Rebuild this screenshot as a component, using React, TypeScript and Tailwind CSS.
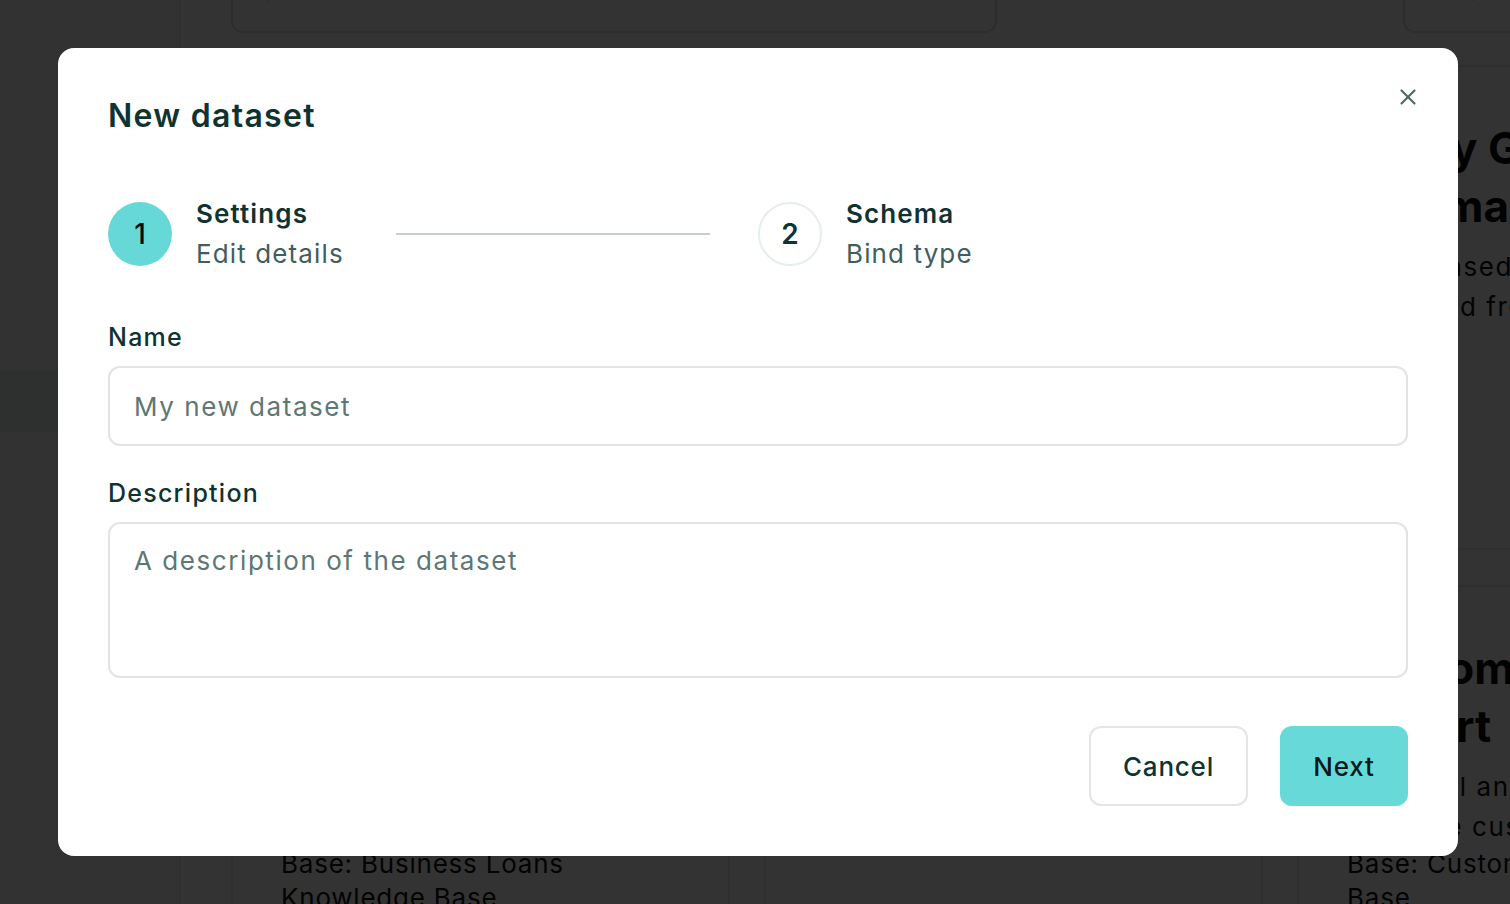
import { X } from 'lucide-react'

const font = { fontFamily: 'Inter, "Noto Sans", sans-serif' }

function Card({ title, desc, base }: { title: string; desc: string; base: string }) {
  return (
    <div className="h-[485px] rounded-[16px] border-2 border-[#e6ecea] bg-white px-[48px] pt-[52px]">
      <h3 className="text-[44px] font-bold leading-[58px] text-[#0b0b0b]">{title}</h3>
      <p className="mt-[12px] text-[26px] leading-[40px] tracking-[0.06em] text-[#111]">{desc}</p>
      <p className="text-[26px] leading-[34px] tracking-[0.03em] text-[#111]">{base}</p>
    </div>
  )
}

export default function App() {
  return (
    <div className="relative h-[904px] w-[1510px] overflow-hidden bg-white" style={font}>
      {/* page behind the dialog */}
      <div className="flex h-full">
        <aside className="w-[181px] shrink-0 border-r-2 border-[#e8eeec] bg-[#f2f9f6] pt-[370px]">
          <div className="h-[62px] bg-[#e4eeee]" />
        </aside>
        <main className="flex-1 pl-[50px] -mt-[47px]">
          <div className="flex items-center gap-[406px]">
            <div className="h-[80px] w-[766px] rounded-[12px] border-2 border-[#e2e2e2] px-[26px] pt-[16px] text-[26px] text-[#111]">
              Search datasets...
            </div>
            <div className="h-[80px] w-[160px] rounded-[12px] border-2 border-[#e2e2e2] px-[30px] pt-[16px] text-[26px] text-[#111]">
              ⇅ Sort
            </div>
          </div>
          <div className="mt-[32px] grid w-[1565px] grid-cols-3 gap-x-[34px] gap-y-[35px]">
            <Card title="Loan Glossary Summary" desc="Rule-based glossary assembled from loan terms base" base="" />
            <Card title="Support Ticket Overview" desc="Rule-based summary generated from the ticket base" base="" />
            <Card title="Policy Glossyr Summaries" desc="Term-based definitions extracted from policy docs base" base="" />
            <Card title="Loan Offers Report" desc="Practical answers generated from the knowledge" base="Base: Business Loans Knowledge Base" />
            <Card title="Help Desk Report" desc="Practical answers generated from the knowledge" base="Base: Help Desk Knowledge Base" />
            <Card title="Customer Support Report" desc="Practical answers generated from the customer" base="Base: Customer Knowledge Base" />
          </div>
        </main>
      </div>

      {/* overlay */}
      <div className="absolute inset-0 flex items-center justify-center bg-black/80 pl-[6px]">
        <div className="relative h-[808px] w-[1400px] rounded-[16px] bg-white px-[50px] pt-[48px] pb-[50px]">
          <button className="absolute right-[37px] top-[36px] text-[#4f6b69]">
            <X size={26} strokeWidth={2} />
          </button>
          <h2 className="text-[32px] font-semibold leading-[40px] tracking-[0.04em] text-[#0f3331]">New dataset</h2>

          {/* stepper */}
          <div className="mt-[58px] flex items-center">
            <div className="flex items-center gap-[24px]">
              <div className="flex h-[64px] w-[64px] items-center justify-center rounded-full bg-[#67d8d8] text-[28px] font-medium text-[#0a0a0a]">
                1
              </div>
              <div className="flex w-[152px] flex-col tracking-[0.07em]">
                <span className="text-[26px] font-semibold leading-[40px] text-[#0f3331]">Settings</span>
                <span className="text-[26px] leading-[40px] text-[#3f5e5c]">Edit details</span>
              </div>
            </div>
            <div className="mx-[48px] h-[2px] w-[314px] bg-[#c7cfce]" />
            <div className="flex items-center gap-[24px]">
              <div className="flex h-[64px] w-[64px] items-center justify-center rounded-full border-2 border-[#e6eeec] bg-white text-[28px] font-semibold text-[#0f3331]">
                2
              </div>
              <div className="flex flex-col tracking-[0.07em]">
                <span className="text-[26px] font-semibold leading-[40px] text-[#0f3331]">Schema</span>
                <span className="text-[26px] leading-[40px] text-[#3f5e5c]">Bind type</span>
              </div>
            </div>
          </div>

          {/* form */}
          <label className="mt-[47px] block text-[25px] font-medium leading-[32px] tracking-[0.05em] text-[#0f3331]">Name</label>
          <input
            placeholder="My new dataset"
            className="mt-[13px] h-[80px] w-full rounded-[12px] border-2 border-[#e3e3e3] px-[24px] text-[26px] tracking-[0.06em] text-[#0f3331] outline-none placeholder:text-[#5d7775]"
            style={font}
          />
          <label className="mt-[31px] block text-[25px] font-medium leading-[32px] tracking-[0.05em] text-[#0f3331]">Description</label>
          <textarea
            placeholder="A description of the dataset"
            className="mt-[13px] block h-[156px] w-full resize-none rounded-[12px] border-2 border-[#e3e3e3] px-[24px] pt-[19px] text-[26px] leading-[36px] tracking-[0.06em] text-[#0f3331] outline-none placeholder:text-[#5d7775]"
            style={font}
          />

          <div className="mt-[48px] flex justify-end gap-[32px]">
            <button className="h-[80px] w-[159px] rounded-[12px] border-2 border-[#e5e5e5] bg-white text-[26px] font-medium tracking-[0.03em] text-[#0f3331]">
              Cancel
            </button>
            <button className="h-[80px] w-[128px] rounded-[12px] bg-[#67d9d9] text-[26px] font-medium tracking-[0.03em] text-[#0a1a1a]">
              Next
            </button>
          </div>
        </div>
      </div>
    </div>
  )
}
